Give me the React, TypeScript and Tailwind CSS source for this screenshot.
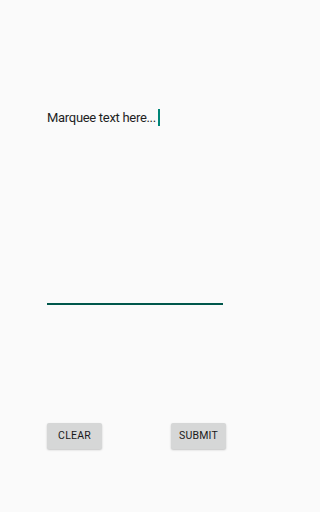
export default function App() {
  return (
    <div className="min-h-[512px] w-full bg-[#fafafa] font-['Roboto',sans-serif]">
      <div className="h-[512px] w-[270px] flex flex-col px-[47px]">
        {/* Marquee */}
        <div className="mt-[109px] flex items-center h-[17px]">
          <span className="text-[13px] leading-[17px] tracking-[-0.3px] text-[#1f1f1f] whitespace-nowrap">
            Marquee text here...
          </span>
          <span className="ml-[2px] w-[2px] h-[17px] bg-[#008577]" />
        </div>

        {/* Input underline */}
        <div className="mt-[177px] h-[2px] w-[176px] bg-[#00574b]" />

        {/* Buttons */}
        <div className="mt-[118px] flex justify-between w-[179px]">
          <button className="w-[55px] h-[26px] bg-[#d6d7d7] rounded-[2px] shadow-[0_1px_2px_rgba(0,0,0,0.22)] text-[10.5px] font-normal tracking-[0.2px] text-[#1a1a1a]">
            CLEAR
          </button>
          <button className="w-[55px] h-[26px] bg-[#d6d7d7] rounded-[2px] shadow-[0_1px_2px_rgba(0,0,0,0.22)] text-[10.5px] font-normal tracking-[0.2px] text-[#1a1a1a]">
            SUBMIT
          </button>
        </div>
      </div>
    </div>
  );
}
